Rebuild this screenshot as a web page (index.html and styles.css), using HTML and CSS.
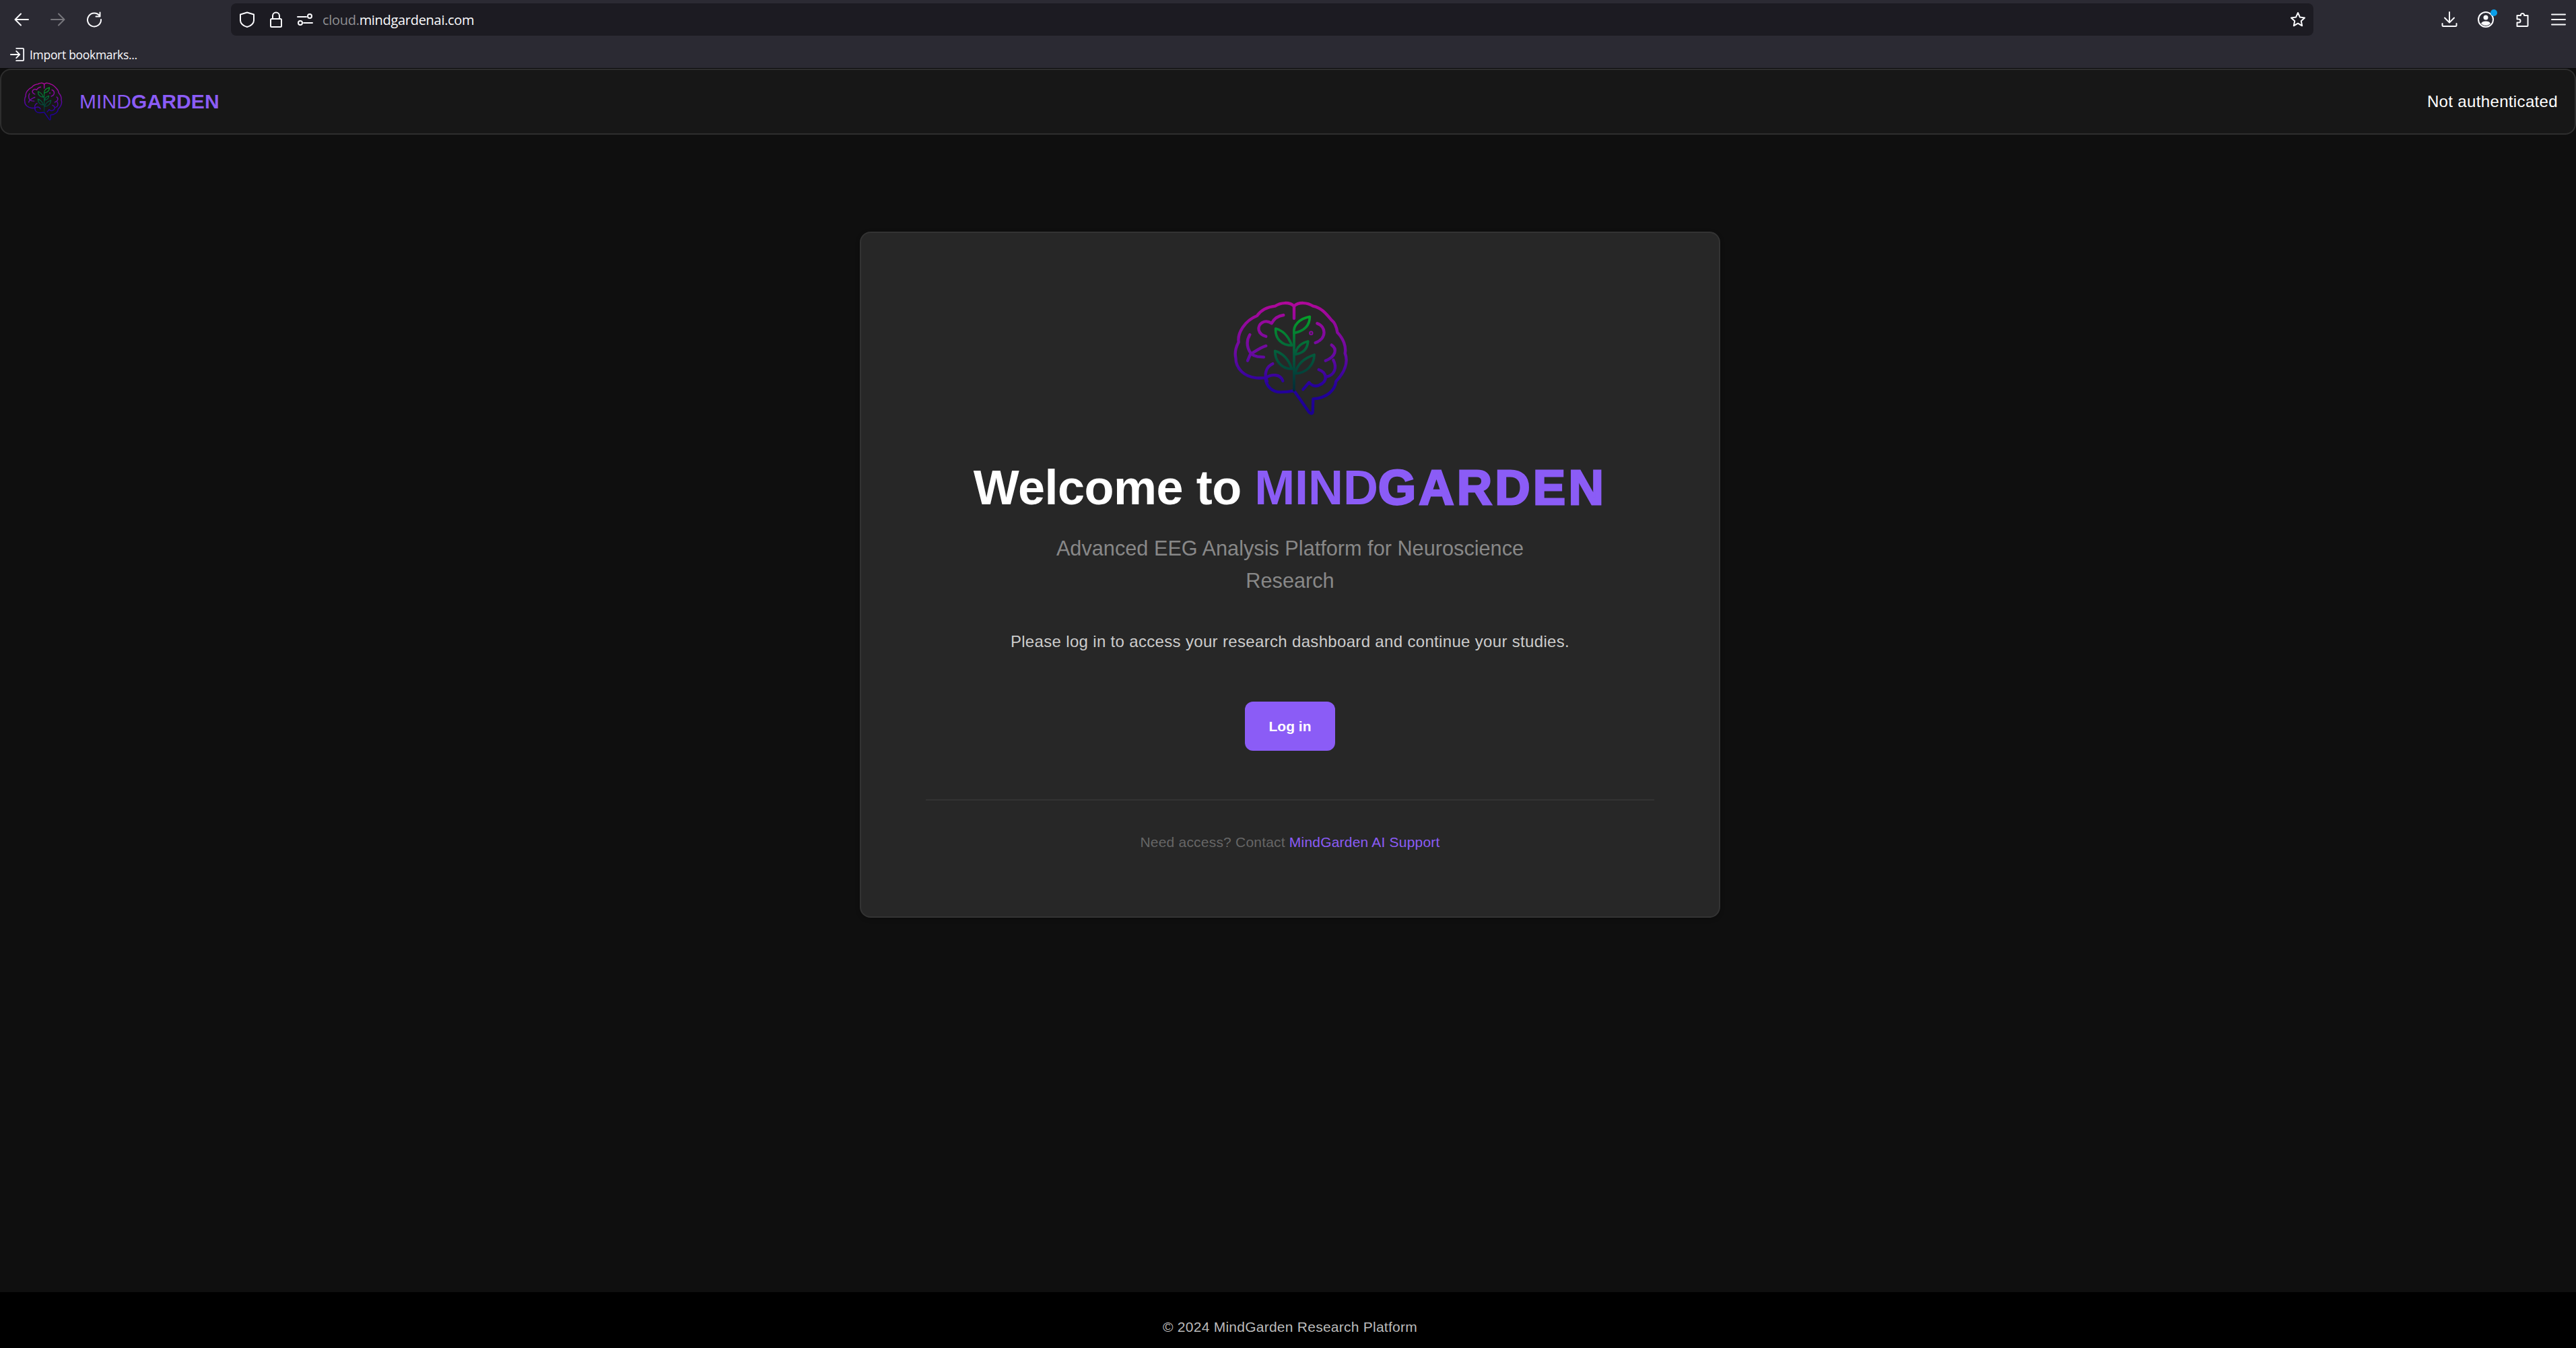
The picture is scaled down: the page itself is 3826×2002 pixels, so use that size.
FILE: index.html
```html
<!DOCTYPE html>
<html lang="en">
<head>
    <meta charset="UTF-8">
    <meta name="viewport" content="width=device-width, initial-scale=1.0">
    <title>MindGarden</title>
    <link rel="stylesheet" href="styles.css">
</head>
<body>
    <!-- Browser toolbar -->
    <div class="browser">
        <div class="toolbar">
            <div class="nav-icons">
                <svg class="icon" viewBox="0 0 24 24"><path d="M22 12H3M11 3.500 2.500 12l8.500 8.500"/></svg>
                <svg class="icon icon-off" viewBox="0 0 24 24"><path d="M2 12h19M13 3.500 21.500 12 13 20.500"/></svg>
                <svg class="icon" viewBox="0 0 24 24"><path d="M20 6.500A10 10 0 1 0 22 12M20.500 1.500v6h-6"/></svg>
            </div>
            <div class="address">
                <div class="address-left">
                    <svg class="icon" viewBox="0 0 24 24"><path d="M12 1.500 22 4.500v9c0 4-4 8-10 9.500C6 21.500 2 17.500 2 13.500v-9z"/></svg>
                    <svg class="icon" viewBox="0 0 24 24"><path d="M7 11V6.500a5 5 0 0 1 10 0V11M5.500 11h13a1.500 1.500 0 0 1 1.500 1.500v9a1.500 1.500 0 0 1-1.500 1.500h-13A1.500 1.500 0 0 1 4 21.500v-9A1.500 1.500 0 0 1 5.500 11z"/></svg>
                    <svg class="icon" viewBox="0 0 24 24"><path d="M1 8h13M10 17h13"/><circle cx="19" cy="7" r="3"/><circle cx="5" cy="17" r="3"/></svg>
                    <span class="url"><span class="url-dim">cloud.</span>mindgardenai.com</span>
                </div>
                <svg class="icon" viewBox="0 0 24 24"><path d="m12 2 3 6.600 7 .8-5.200 4.800 1.400 7.100L12 17.700l-6.200 3.600 1.400-7.100L2 9.400l7-.8z"/></svg>
            </div>
            <div class="tool-icons">
                <svg class="icon" viewBox="0 0 24 24"><path d="M12 1v15M5 9.500l7 7 7-7M1.500 18v2.500A1.500 1.500 0 0 0 3 22h18a1.500 1.500 0 0 0 1.500-1.500V18"/></svg>
                <span class="account">
                    <svg class="icon" viewBox="0 0 24 24"><circle cx="12" cy="12" r="11"/><circle class="solid" cx="12" cy="9" r="3.500"/><path class="solid" d="M5 18c1-2.500 3.500-3.500 7-3.500s6 1 7 3.500c-2 2-4.500 3-7 3s-5-1-7-3z"/></svg>
                    <span class="account-dot"></span>
                </span>
                <svg class="icon" viewBox="0 0 24 24"><path d="M10 7H4.500v5.500H7a2.500 2.500 0 0 1 0 5H4.500V23h15a1 1 0 0 0 1-1V7H15V5.500a2.750 2.750 0 0 0-5 0z" transform="translate(0 -1)"/></svg>
                <svg class="icon" viewBox="0 0 24 24"><path d="M2 4.500h20M2 12h20M2 19.500h20"/></svg>
            </div>
        </div>
        <div class="bookmarks">
            <svg class="icon icon-small" viewBox="0 0 24 24"><path d="M10 2h10.500A1.500 1.500 0 0 1 22 3.500v17a1.500 1.500 0 0 1-1.500 1.500H10M1 12h14M10 6.500l5.500 5.500-5.500 5.500"/></svg>
            <span>Import bookmarks...</span>
        </div>
    </div>

    <header class="site-header">
        <div class="brand">
            <svg class="logo-small" viewBox="140 70 540 540">
                <defs>
                    <linearGradient id="brainGrad" gradientUnits="userSpaceOnUse" x1="0" y1="85" x2="0" y2="590">
                        <stop offset="0" stop-color="#b0089a"/>
                        <stop offset="0.45" stop-color="#6a0aa0"/>
                        <stop offset="0.75" stop-color="#24009c"/>
                        <stop offset="1" stop-color="#1a0090"/>
                    </linearGradient>
                    <linearGradient id="plantGrad" gradientUnits="userSpaceOnUse" x1="0" y1="150" x2="0" y2="480">
                        <stop offset="0" stop-color="#06a02a"/>
                        <stop offset="0.5" stop-color="#035c3c"/>
                        <stop offset="1" stop-color="#022c38"/>
                    </linearGradient>
                    <symbol id="brain" viewBox="140 70 540 540">
                        <g fill="none" stroke="url(#brainGrad)" stroke-width="13" stroke-linecap="round" stroke-linejoin="round">
                            <path d="M425 482C405 486 385 488 365 488C330 488 300 465 298 425C285 425 270 426 258 425C205 420 165 385 165 335C158 305 170 280 178 265C172 225 205 170 260 148C280 120 310 108 340 105C365 88 405 85 425 105C445 85 485 88 510 105C545 112 565 135 590 165C610 180 615 200 618 222C645 250 658 285 652 315C668 355 650 400 612 440C608 480 570 515 510 518L508 578C506 586 498 584 492 578Z"/>
                            <path d="M425 105V160"/>
                            <path d="M378 145C352 148 335 162 325 182C295 160 262 185 268 212C272 228 285 236 300 240"/>
                            <path d="M228 232C205 270 220 325 262 330L290 332"/>
                            <path d="M300 282C272 290 240 315 230 320L218 348"/>
                            <path d="M330 362C300 375 290 410 305 440"/>
                            <path d="M298 425C325 405 365 408 375 438"/>
                            <path d="M528 182C568 195 572 250 520 268"/>
                            <path d="M592 278C618 295 612 330 565 348"/>
                            <path d="M600 345C618 380 605 412 570 420"/>
                            <path d="M535 388C570 400 580 440 535 458C515 465 500 455 492 445L465 476"/>
                            <circle cx="501" cy="225" r="3"/>
                        </g>
                        <g fill="none" stroke="url(#plantGrad)" stroke-width="11" stroke-linecap="round" stroke-linejoin="round">
                            <path d="M425 480V225"/>
                            <path d="M425 225C420 190 450 160 495 152C495 190 475 215 425 225Z"/>
                            <path d="M415 280C400 240 380 215 343 205C340 250 370 280 415 280Z"/>
                            <path d="M430 320C435 290 455 270 487 262C485 295 465 315 430 320Z"/>
                            <path d="M415 385C400 340 375 315 340 305C340 350 370 385 415 385Z"/>
                            <path d="M430 405C440 360 475 335 515 322C515 365 480 405 430 405Z"/>
                        </g>
                    </symbol>
                </defs>
                <use href="#brain" x="140" y="70" width="540" height="540"/>
            </svg>
            <span class="brand-name">MIND<strong>GARDEN</strong></span>
        </div>
        <span class="auth-status">Not authenticated</span>
    </header>

    <main>
        <div class="login-card">
            <svg class="logo-large" viewBox="140 70 540 540">
                <use href="#brain" x="140" y="70" width="540" height="540"/>
            </svg>
            <h1>Welcome to <span class="accent">MIND<strong>GARDEN</strong></span></h1>
            <p class="subtitle">Advanced EEG Analysis Platform for Neuroscience Research</p>
            <p class="intro">Please log in to access your research dashboard and continue your studies.</p>
            <button class="login-btn">Log in</button>
            <div class="card-foot">
                Need access? Contact <a href="#">MindGarden AI Support</a>
            </div>
        </div>
    </main>

    <footer>© 2024 MindGarden Research Platform</footer>
</body>
</html>
```

FILE: styles.css
```css
* {
    box-sizing: border-box;
}

body {
    margin: 0;
    min-height: 100vh;
    display: flex;
    flex-direction: column;
    background: #0f0f0f;
    font-family: "Liberation Sans", Arial, sans-serif;
    color: white;
}

/* Browser toolbar */
.browser {
    height: 102px;
    background: #2b2a33;
    border-bottom: 1px solid #0c0c0d;
    font-family: "Open Sans", sans-serif;
    flex-shrink: 0;
}

.toolbar {
    display: flex;
    align-items: center;
    height: 58px;
    padding: 0 14px 0 20px;
}

.icon {
    width: 24px;
    height: 24px;
    fill: none;
    stroke: #fbfbfe;
    stroke-width: 2;
    stroke-linecap: round;
    stroke-linejoin: round;
    flex-shrink: 0;
}

.icon .solid {
    fill: #fbfbfe;
    stroke: none;
}

.icon-off {
    stroke: #77767c;
}

.icon-small {
    width: 22px;
    height: 22px;
}

.nav-icons {
    display: flex;
    gap: 30px;
    width: 323px;
}

.address {
    width: 3093px;
    height: 48px;
    background: #1c1b22;
    border-radius: 8px;
    display: flex;
    align-items: center;
    justify-content: space-between;
    padding: 0 11px 0 12px;
}

.address-left {
    display: flex;
    align-items: center;
    gap: 19px;
}

.url {
    font-size: 20px;
    letter-spacing: -0.3px;
    color: #fbfbfe;
    margin-left: -5px;
}

.url-dim {
    color: #8f8f92;
}

.tool-icons {
    display: flex;
    align-items: center;
    gap: 30px;
    margin-left: auto;
}

.account {
    position: relative;
    display: flex;
}

.account-dot {
    position: absolute;
    top: -3px;
    right: -5px;
    width: 10px;
    height: 10px;
    border-radius: 50%;
    background: #0a9fe8;
}

.bookmarks {
    display: flex;
    align-items: center;
    gap: 7px;
    height: 43px;
    padding: 2px 0 0 15px;
    font-size: 17.5px;
    letter-spacing: -0.3px;
    color: #fbfbfe;
}

/* Site header */
.site-header {
    height: 98px;
    flex-shrink: 0;
    display: flex;
    align-items: center;
    justify-content: space-between;
    padding: 0 25px 0 32px;
    background: #171717;
    border: 2px solid #2e2e2e;
    border-radius: 16px;
}

.brand {
    display: flex;
    align-items: center;
    gap: 24px;
}

.logo-small {
    width: 60px;
    height: 60px;
}

.brand-name {
    font-size: 30px;
    letter-spacing: 0.1px;
    color: #8b5cf6;
}

.auth-status {
    font-size: 24px;
    letter-spacing: 0.35px;
}

/* Login card */
main {
    flex: 1;
    display: flex;
    justify-content: center;
    align-items: flex-start;
    padding: 144px 0 0 6px;
}

.login-card {
    width: 1278px;
    height: 1019px;
    padding: 96px;
    background: #272727;
    border: 2px solid #333;
    border-radius: 16px;
    box-shadow: 0 2px 6px rgba(0, 0, 0, 0.25);
    display: flex;
    flex-direction: column;
    align-items: center;
    text-align: center;
}

.logo-large {
    width: 180px;
    height: 180px;
    margin: 1px 0 58px 2px;
    flex-shrink: 0;
}

h1 {
    margin: 0 0 24px;
    font-size: 72px;
    line-height: 1.2;
    font-weight: bold;
    letter-spacing: -0.5px;
}

.accent {
    color: #8b5cf6;
    letter-spacing: 0;
}

.accent strong {
    -webkit-text-stroke: 3px #8b5cf6;
    letter-spacing: 4.5px;
}

.subtitle {
    margin: 0 0 48px;
    max-width: 800px;
    font-size: 30.7px;
    line-height: 48px;
    color: #888;
}

.intro {
    margin: 0 0 71px;
    font-size: 24px;
    line-height: 36px;
    letter-spacing: 0.33px;
    color: #ccc;
}

.login-btn {
    width: 134px;
    height: 73px;
    flex-shrink: 0;
    border: none;
    border-radius: 12px;
    background: #8b5cf6;
    color: white;
    font-family: inherit;
    font-size: 21px;
    font-weight: bold;
}

.card-foot {
    width: 100%;
    margin-top: 72px;
    padding-top: 50px;
    border-top: 2px solid #333;
    font-size: 21px;
    letter-spacing: 0.2px;
    color: #666;
}

.card-foot a {
    color: #8b5cf6;
    text-decoration: none;
}

footer {
    height: 83px;
    flex-shrink: 0;
    display: flex;
    align-items: center;
    justify-content: center;
    padding: 20px 0 0 6px;
    background: #000;
    font-size: 21px;
    letter-spacing: 0.25px;
    color: #bbb;
}
```
